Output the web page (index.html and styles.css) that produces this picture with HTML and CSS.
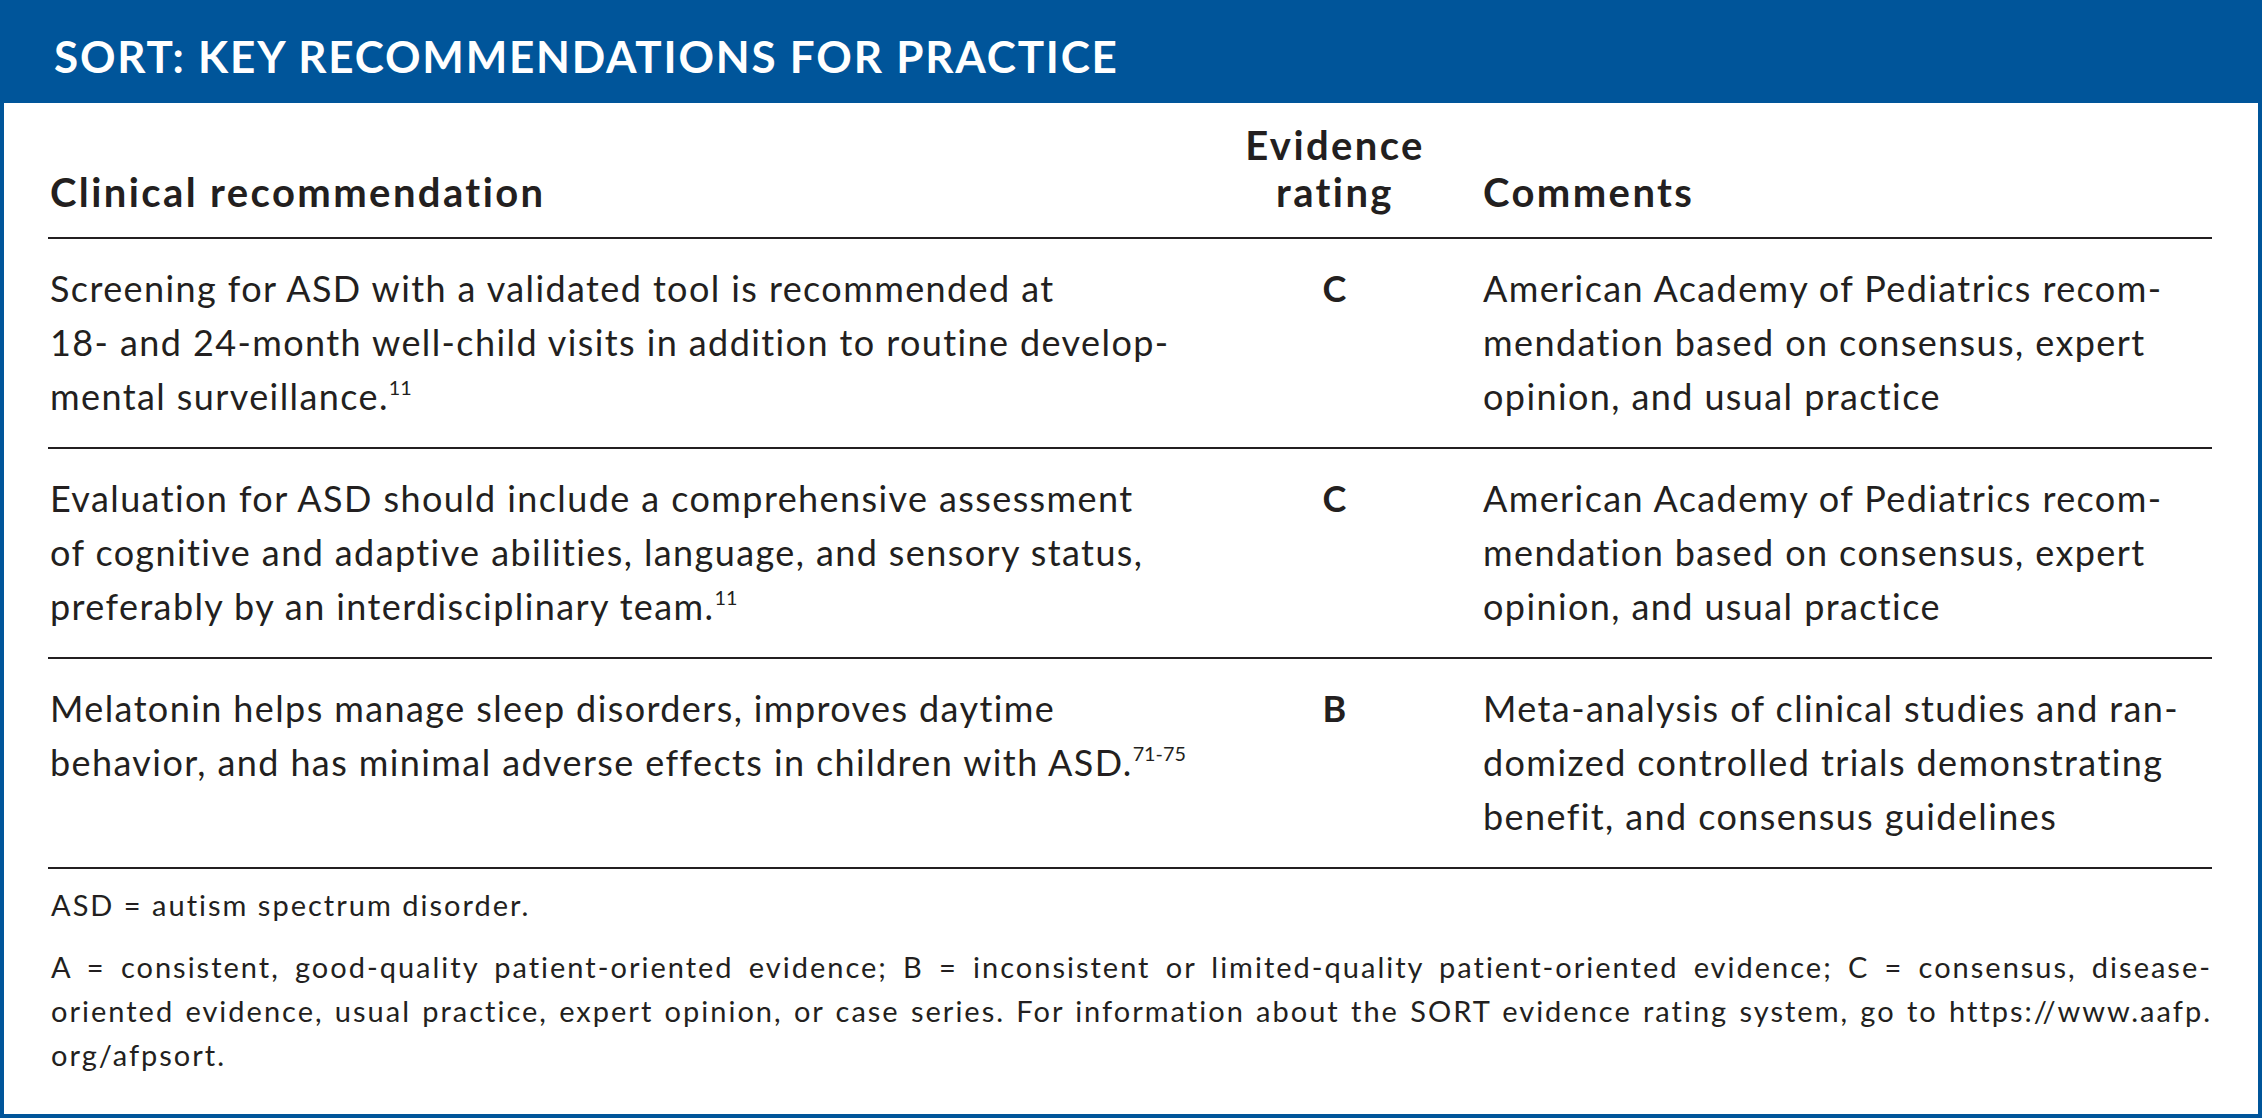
FILE: index.html
```html
<!DOCTYPE html>
<html lang="en">
<head>
<meta charset="utf-8">
<title>SORT: Key Recommendations for Practice</title>
<link rel="stylesheet" href="styles.css">
</head>
<body>
<div class="card">
  <div class="bar"><h1 class="title">SORT: KEY RECOMMENDATIONS FOR PRACTICE</h1></div>
  <div class="content">
    <div class="grid head">
      <div class="c1">Clinical recommendation</div>
      <div class="c2">Evidence<br>rating</div>
      <div class="c3">Comments</div>
    </div>
    <div class="grid row">
      <div class="c1">Screening for ASD with a validated tool is recommended at<br>18- and 24-month well-child visits in addition to routine develop-<br>mental surveillance.<sup>11</sup></div>
      <div class="c2">C</div>
      <div class="c3">American Academy of Pediatrics recom-<br>mendation based on consensus, expert<br>opinion, and usual practice</div>
    </div>
    <div class="grid row">
      <div class="c1">Evaluation for ASD should include a comprehensive assessment<br>of cognitive and adaptive abilities, language, and sensory status,<br>preferably by an interdisciplinary team.<sup>11</sup></div>
      <div class="c2">C</div>
      <div class="c3">American Academy of Pediatrics recom-<br>mendation based on consensus, expert<br>opinion, and usual practice</div>
    </div>
    <div class="grid row">
      <div class="c1">Melatonin helps manage sleep disorders, improves daytime<br>behavior, and has minimal adverse effects in children with ASD.<sup>71-75</sup></div>
      <div class="c2">B</div>
      <div class="c3">Meta-analysis of clinical studies and ran-<br>domized controlled trials demonstrating<br>benefit, and consensus guidelines</div>
    </div>
    <div class="notes">
      <p class="note">ASD = autism spectrum disorder.</p>
      <p class="note">
        <span class="jl">A = consistent, good-quality patient-oriented evidence; B = inconsistent or limited-quality patient-oriented evidence; C = consensus, disease-</span>
        <span class="jl">oriented evidence, usual practice, expert opinion, or case series. For information about the SORT evidence rating system, go to https://www.aafp.</span>
        <span class="ll">org/afpsort.</span>
      </p>
    </div>
  </div>
</div>
</body>
</html>
```
FILE: styles.css
```css
html, body {
  margin: 0;
  padding: 0;
  background: #ffffff;
}

body {
  font-family: Lato, "Liberation Sans", sans-serif;
  color: #231f20;
}

.card {
  box-sizing: border-box;
  width: 2262px;
  height: 1118px;
  border: 4px solid #00559a;
  background: #ffffff;
}

.bar {
  box-sizing: border-box;
  height: 99px;
  background: #00559a;
  display: flex;
  align-items: center;
  padding: 4px 0 0 50px;
}

.title {
  margin: 0;
  font-size: 44px;
  font-weight: 700;
  color: #ffffff;
  letter-spacing: 1.8px;
  line-height: 1;
}

.content {
  padding: 0 46px 0 44px;
}

.grid {
  display: grid;
  grid-template-columns: 1192px 190px 1fr;
  border-bottom: 2px solid #231f20;
}

.c1 {
  padding-left: 2px;
}

.c2 {
  text-align: center;
  font-weight: 700;
}

.c3 {
  padding-left: 53px;
}

.head {
  align-items: end;
  padding: 19px 0 21px;
  font-size: 40px;
  line-height: 47px;
  font-weight: 700;
  letter-spacing: 2.4px;
}

.row {
  padding: 22px 0 24px;
  font-size: 36px;
  line-height: 54px;
  letter-spacing: 1.4px;
}

sup {
  font-size: 0.55em;
  line-height: 0;
  letter-spacing: 0;
  vertical-align: 0.75em;
}

.notes {
  padding-top: 14px;
  font-size: 29px;
  line-height: 44px;
  letter-spacing: 2px;
}

.note {
  margin: 0 0 18px;
  padding-left: 3px;
}

.jl {
  display: block;
  text-align: justify;
  text-align-last: justify;
}

.ll {
  display: block;
}
```
